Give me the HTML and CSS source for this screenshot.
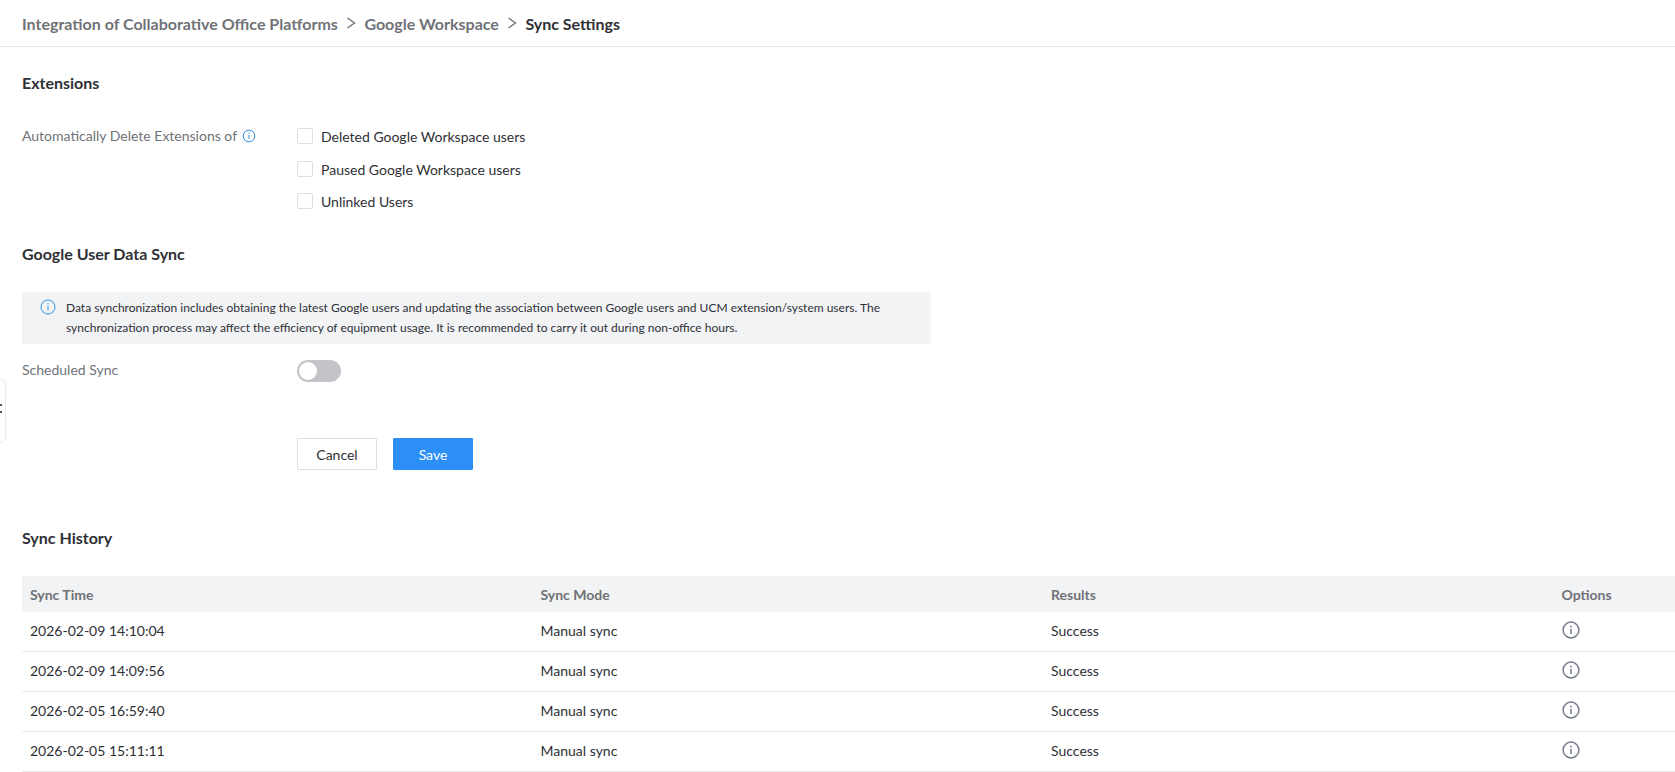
FILE: index.html
```html
<!DOCTYPE html>
<html lang="en">
<head>
  <meta charset="UTF-8">
  <title>Sync Settings</title>
  <link rel="stylesheet" href="styles.css">
</head>
<body>
  <header class="crumbs">
    <span>Integration of Collaborative Office Platforms</span>
    <svg class="crumb-sep" viewBox="0 0 10 12"><path d="M1.500 1 8.500 6l-7 5"/></svg>
    <span>Google Workspace</span>
    <svg class="crumb-sep" viewBox="0 0 10 12"><path d="M1.500 1 8.500 6l-7 5"/></svg>
    <span class="current">Sync Settings</span>
  </header>

  <div class="side-tab"><i></i><i></i></div>

  <main class="content">
    <h2 class="title title-ext">Extensions</h2>
    <div class="form-row ext-row">
      <div class="label">Automatically Delete Extensions of
        <svg class="tip" viewBox="0 0 14 14"><circle cx="7" cy="7" r="5.800"/><path d="M7 6v4M7 3.600v1.200"/></svg>
      </div>
      <div class="checks">
        <label class="check"><span class="box"></span>Deleted Google Workspace users</label>
        <label class="check"><span class="box"></span>Paused Google Workspace users</label>
        <label class="check"><span class="box"></span>Unlinked Users</label>
      </div>
    </div>

    <h2 class="title title-sync">Google User Data Sync</h2>
    <div class="notice">
      <svg class="notice-icon" viewBox="0 0 16 16"><circle cx="8" cy="8" r="7"/><path d="M8 7v4.500M8 4v1.400"/></svg>
      <p>Data synchronization includes obtaining the latest Google users and updating the association between Google users and UCM extension/system users. The synchronization process may affect the efficiency of equipment usage. It is recommended to carry it out during non-office hours.</p>
    </div>
    <div class="form-row switch-row">
      <div class="label">Scheduled Sync</div>
      <span class="switch"><span class="knob"></span></span>
    </div>
    <div class="actions">
      <button class="btn">Cancel</button>
      <button class="btn primary">Save</button>
    </div>

    <h2 class="title title-history">Sync History</h2>
    <table class="history">
      <thead>
        <tr>
          <th class="col-wide">Sync Time</th>
          <th class="col-wide">Sync Mode</th>
          <th class="col-wide">Results</th>
          <th>Options</th>
        </tr>
      </thead>
      <tbody>
        <tr>
          <td>2026-02-09 14:10:04</td><td>Manual sync</td><td>Success</td>
          <td><svg class="opt" viewBox="0 0 18 18"><circle cx="9" cy="9" r="7.900"/><path d="M9 8v5M9 4.800v1.600"/></svg></td>
        </tr>
        <tr>
          <td>2026-02-09 14:09:56</td><td>Manual sync</td><td>Success</td>
          <td><svg class="opt" viewBox="0 0 18 18"><circle cx="9" cy="9" r="7.900"/><path d="M9 8v5M9 4.800v1.600"/></svg></td>
        </tr>
        <tr>
          <td>2026-02-05 16:59:40</td><td>Manual sync</td><td>Success</td>
          <td><svg class="opt" viewBox="0 0 18 18"><circle cx="9" cy="9" r="7.900"/><path d="M9 8v5M9 4.800v1.600"/></svg></td>
        </tr>
        <tr>
          <td>2026-02-05 15:11:11</td><td>Manual sync</td><td>Success</td>
          <td><svg class="opt" viewBox="0 0 18 18"><circle cx="9" cy="9" r="7.900"/><path d="M9 8v5M9 4.800v1.600"/></svg></td>
        </tr>
      </tbody>
    </table>
  </main>
</body>
</html>
```

FILE: styles.css
```css
html, body {
  height: 100%;
}

body {
  margin: 0;
  overflow: hidden;
  background-color: #fff;
  color: #2e3035;
  font-family: "Lato", "Liberation Sans", sans-serif;
  font-size: 14px;
}

.crumbs {
  display: flex;
  align-items: center;
  height: 46px;
  padding-left: 22px;
  border-bottom: 1px solid #e6e8ea;
  color: #6f7277;
  font-size: 16px;
  font-weight: 700;
}

.crumbs .current {
  color: #2e3035;
}

.crumb-sep {
  width: 10px;
  height: 12px;
  margin: 0 8px 0 8.500px;
  fill: none;
  stroke: #6f7277;
  stroke-width: 1.400;
}

.side-tab {
  position: absolute;
  left: -4px;
  top: 379px;
  width: 8px;
  height: 62px;
  border: 1px solid #e8eaec;
  border-radius: 5px;
  background-color: #fff;
}

.side-tab i {
  position: absolute;
  left: 3px;
  top: 24px;
  width: 2px;
  height: 2px;
  background-color: #555;
}

.side-tab i + i {
  top: 31px;
}

.content {
  padding-left: 22px;
}

.title {
  margin: 0;
  color: #2e3035;
  font-size: 16px;
  font-weight: 700;
  line-height: 20px;
}

.title-ext {
  padding-top: 26px;
}

.title-sync {
  margin-top: 22px;
}

.title-history {
  margin-top: 58px;
}

.form-row {
  display: flex;
}

.form-row > .label {
  width: 275px;
  flex: none;
  color: #6f7277;
}

.ext-row {
  margin-top: 32px;
}

.label {
  line-height: 22px;
}

.tip {
  width: 14px;
  height: 14px;
  margin-left: 2px;
  vertical-align: -2px;
  fill: none;
  stroke: #2e8fe0;
  stroke-width: 1;
}

.checks {
  display: flex;
  flex-direction: column;
}

.check {
  display: flex;
  align-items: center;
  height: 22px;
  margin-bottom: 10px;
}

.check:first-child {
  margin-bottom: 11px;
}

.box {
  width: 14px;
  height: 14px;
  margin-right: 8px;
  border: 1px solid #dcdfe3;
  border-radius: 2px;
  background-color: #fff;
}

.notice {
  display: flex;
  width: 871px;
  height: 46px;
  margin-top: 28px;
  padding: 6px 20px 0 18px;
  background-color: #f2f3f5;
  font-size: 12px;
  line-height: 20px;
}

.notice p {
  margin: 0;
}

.notice-icon {
  flex: none;
  width: 16px;
  height: 16px;
  margin: 1px 10px 0 0;
  fill: none;
  stroke: #2e8fe0;
  stroke-width: 1;
}

.switch-row {
  margin-top: 16px;
}

.switch-row .label {
  line-height: 20px;
}

.switch {
  position: relative;
  display: block;
  width: 44px;
  height: 22px;
  border-radius: 11px;
  background-color: #c2c4c8;
}

.knob {
  position: absolute;
  left: 2px;
  top: 2px;
  width: 18px;
  height: 18px;
  border-radius: 50%;
  background-color: #fff;
}

.actions {
  display: flex;
  gap: 16px;
  margin: 56px 0 0 275px;
}

.btn {
  width: 80px;
  height: 32px;
  padding: 0;
  border: 1px solid #dcdfe3;
  border-radius: 1px;
  background-color: #fff;
  color: #2e3035;
  font-family: inherit;
  font-size: 14px;
}

.btn.primary {
  border-color: #2b8ff5;
  background-color: #2b8ff5;
  color: #fff;
}

.history {
  width: 1653px;
  margin-top: 28px;
  border-collapse: collapse;
  table-layout: fixed;
}

.history .col-wide {
  width: 494.500px;
}

.history th {
  height: 36px;
  padding: 0 8px;
  background-color: #f2f3f5;
  color: #6f7277;
  font-size: 14px;
  font-weight: 700;
  text-align: left;
}

.history td {
  height: 37px;
  padding: 0 8px 2px;
  border-bottom: 1px solid #e6e8ea;
}

.opt {
  display: block;
  width: 18px;
  height: 18px;
  margin-top: -2px;
  fill: none;
  stroke: #737a8c;
  stroke-width: 1.500;
}
```
